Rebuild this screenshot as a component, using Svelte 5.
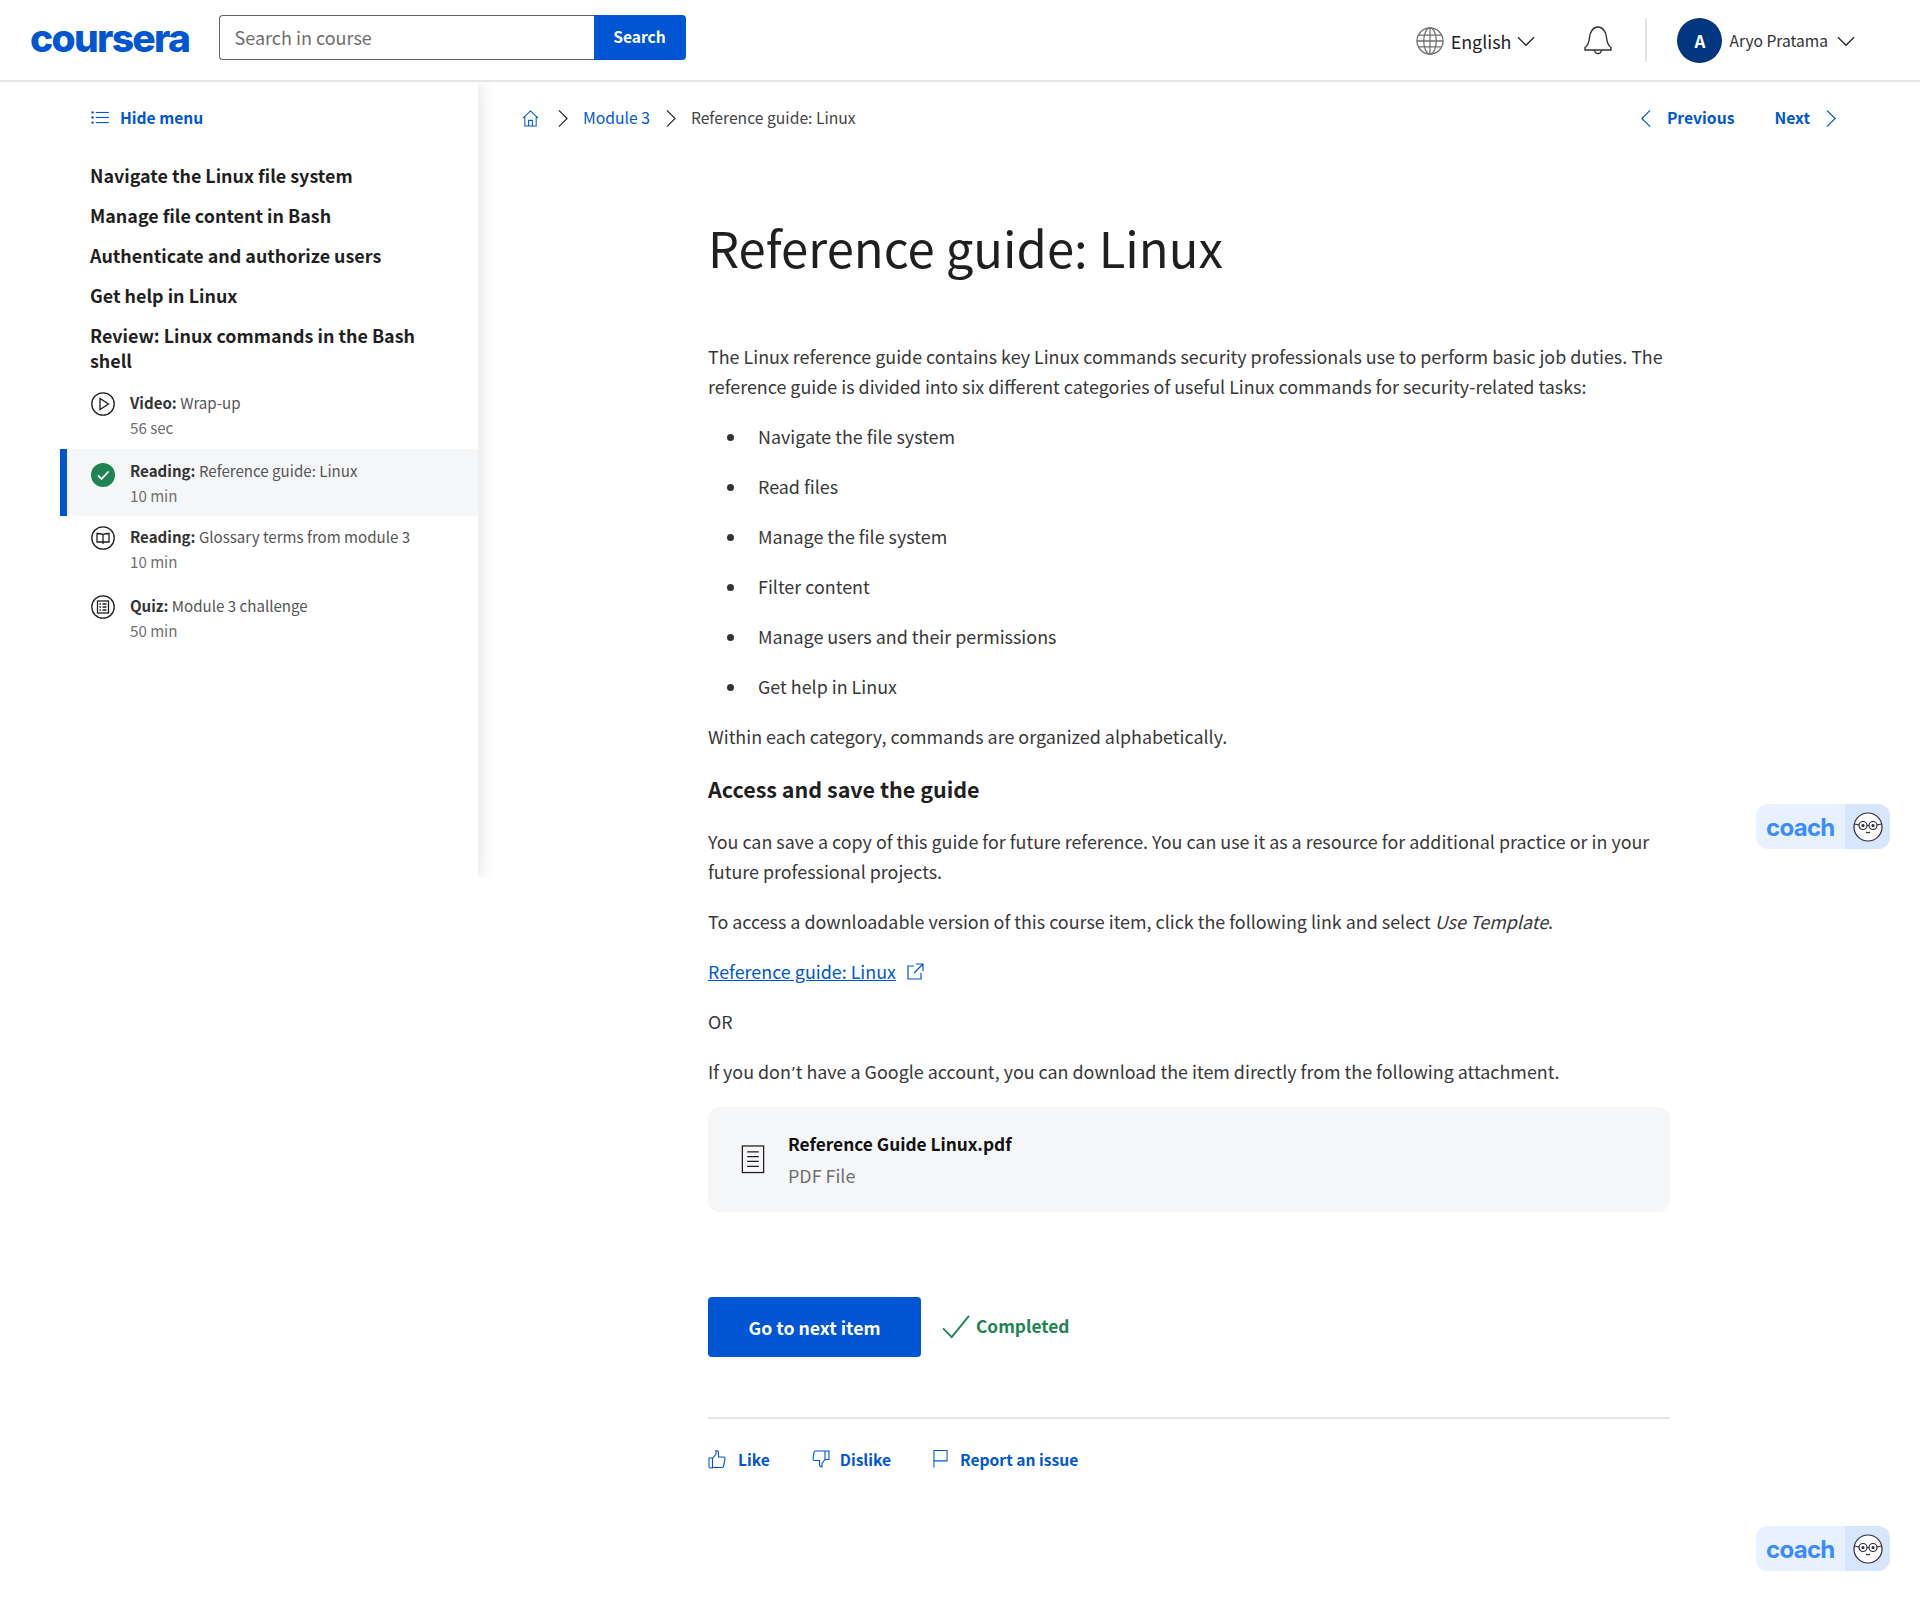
<script>
  const sections = [
    'Navigate the Linux file system',
    'Manage file content in Bash',
    'Authenticate and authorize users',
    'Get help in Linux',
    'Review: Linux commands in the Bash shell'
  ];
  const items = [
    { kind: 'video', label: 'Video:', name: 'Wrap-up', time: '56 sec' },
    { kind: 'done', label: 'Reading:', name: 'Reference guide: Linux', time: '10 min', active: true },
    { kind: 'book', label: 'Reading:', name: 'Glossary terms from module 3', time: '10 min' },
    { kind: 'quiz', label: 'Quiz:', name: 'Module 3 challenge', time: '50 min' }
  ];
  const bullets = [
    'Navigate the file system',
    'Read files',
    'Manage the file system',
    'Filter content',
    'Manage users and their permissions',
    'Get help in Linux'
  ];
</script>

<div class="page">
  <header class="topbar">
    <span class="logo">coursera</span>
    <div class="search">
      <input class="search-input" placeholder="Search in course" />
      <button class="search-btn">Search</button>
    </div>
    <div class="spacer"></div>
    <div class="lang">
      <svg width="28" height="28" viewBox="0 0 29 29" fill="none" stroke="#6f6f6f" stroke-width="1.3">
        <circle cx="14.5" cy="14.5" r="13.5" />
        <ellipse cx="14.5" cy="14.5" rx="6.5" ry="13.5" />
        <path d="M14.5 1v27M2.5 8.5h24M1 14.5h27M2.5 20.5h24" />
      </svg>
      <span class="lang-name">English</span>
      <svg width="18" height="11" viewBox="0 0 19 11" fill="none" stroke="#1f1f1f" stroke-width="1.3"><path d="M1 1l8.500 8.500L18 1" /></svg>
    </div>
    <svg class="bell" width="28" height="30" viewBox="0 0 28 30" fill="none" stroke="#333" stroke-width="1.4">
      <path d="M1 24h26v-2.500c-3-2-4-5-4.500-10C22 5.500 18.500 1 14 1S6 5.500 5.500 11.500c-.5 5-1.500 8-4.500 10z" />
      <path d="M10.500 24a3.500 3.500 0 0 0 7 0" />
    </svg>
    <div class="divider"></div>
    <div class="avatar">A</div>
    <span class="username">Aryo Pratama</span>
    <svg class="user-caret" width="18" height="11" viewBox="0 0 19 11" fill="none" stroke="#1f1f1f" stroke-width="1.3"><path d="M1 1l8.500 8.500L18 1" /></svg>
  </header>

  <div class="body">
    <aside class="sidebar">
      <div class="hide-menu">
        <svg width="18" height="13" viewBox="0 0 19 14" fill="#0056d2"><circle cx="1.500" cy="1.500" r="1.300" /><circle cx="1.500" cy="7" r="1.300" /><circle cx="1.500" cy="12.500" r="1.300" /><rect x="5" y="1" width="14" height="1.200" /><rect x="5" y="6.400" width="14" height="1.200" /><rect x="5" y="11.900" width="14" height="1.200" /></svg>
        <span>Hide menu</span>
      </div>
      <nav class="sections">
        {#each sections as s}
          <div class="section">{s}</div>
        {/each}
      </nav>
      <div class="items">
        {#each items as it}
          <div class="item" class:active={it.active}>
            <span class="item-icon">
              {#if it.kind === 'done'}
                <svg width="24" height="24" viewBox="0 0 24 24"><circle cx="12" cy="12" r="12" fill="#1f8354" /><path d="M7 12.500l3.500 3.500 7-7.500" fill="none" stroke="#fff" stroke-width="1.800" /></svg>
              {:else}
                <svg width="24" height="24" viewBox="0 0 24 24" fill="none" stroke="#1f1f1f" stroke-width="1.300">
                  <circle cx="12" cy="12" r="11.200" />
                  {#if it.kind === 'video'}
                    <path d="M9 6.500v11l8.500-5.500z" />
                  {:else if it.kind === 'book'}
                    <path d="M12 8.500c-1.500-1-4-1-6-1v8.500h6c2 0 4 0 6 0V7.500c-2 0-4.500 0-6 1zM12 8.500v9.500" />
                  {:else}
                    <rect x="6.500" y="6" width="11" height="12" />
                    <path d="M8.500 9h1.500M11.500 9h4M8.500 12h1.500M11.500 12h4M8.500 15h1.500M11.500 15h4" />
                  {/if}
                </svg>
              {/if}
            </span>
            <div class="item-text">
              <div class="item-title"><b>{it.label}</b> {it.name}</div>
              <div class="item-time">{it.time}</div>
            </div>
          </div>
        {/each}
      </div>
    </aside>

    <main class="main">
      <div class="crumbbar">
        <svg class="home" width="17" height="17" viewBox="0 0 18 18" fill="none" stroke="#0056d2" stroke-width="1.100"><path d="M1 8.500L9 1l8 7.500M3 7v10h12V7M7 17v-6h4v6" /></svg>
        <svg class="crumb-sep" width="10" height="19" viewBox="0 0 11 20" fill="none" stroke="#1f1f1f" stroke-width="1.200"><path d="M1 1l9 9-9 9" /></svg>
        <span class="crumb-link">Module 3</span>
        <svg class="crumb-sep second" width="10" height="19" viewBox="0 0 11 20" fill="none" stroke="#1f1f1f" stroke-width="1.200"><path d="M1 1l9 9-9 9" /></svg>
        <span class="crumb-cur">Reference guide: Linux</span>
        <div class="spacer"></div>
        <div class="pager">
          <svg width="10" height="19" viewBox="0 0 11 20" fill="none" stroke="#0056d2" stroke-width="1.300"><path d="M10 1l-9 9 9 9" /></svg>
          <span class="prev">Previous</span>
          <span class="next">Next</span>
          <svg width="10" height="19" viewBox="0 0 11 20" fill="none" stroke="#0056d2" stroke-width="1.300"><path d="M1 1l9 9-9 9" /></svg>
        </div>
      </div>

      <article class="article">
        <h1>Reference guide: Linux</h1>
        <p>The Linux reference guide contains key Linux commands security professionals use to perform basic job duties. The reference guide is divided into six different categories of useful Linux commands for security-related tasks:</p>
        <ul>
          {#each bullets as b}
            <li>{b}</li>
          {/each}
        </ul>
        <p>Within each category, commands are organized alphabetically.</p>
        <h2>Access and save the guide</h2>
        <p>You can save a copy of this guide for future reference. You can use it as a resource for additional practice or in your future professional projects.</p>
        <p>To access a downloadable version of this course item, click the following link and select <em>Use Template</em>.</p>
        <p class="ref-link">
          <a href="#top">Reference guide: Linux</a>
          <svg width="17" height="17" viewBox="0 0 17 17" fill="none" stroke="#0056d2" stroke-width="1.200"><path d="M7 3H1v13h13v-6M9 1h7v7M16 1L7 10" /></svg>
        </p>
        <p>OR</p>
        <p>If you don<span class="apos">’</span>t have a Google account, you can download the item directly from the following attachment.</p>

        <div class="attachment">
          <svg width="24" height="29" viewBox="0 0 24 30" fill="none" stroke="#1f1f1f" stroke-width="1.300"><rect x="1" y="1" width="22" height="27.500" /><path d="M6 7h12M6 12h12M6 17h12M6 22h12" /></svg>
          <div>
            <div class="att-name">Reference Guide Linux.pdf</div>
            <div class="att-type">PDF File</div>
          </div>
        </div>

        <div class="actions">
          <button class="next-btn">Go to next item</button>
          <svg width="29" height="24" viewBox="0 0 30 25" fill="none" stroke="#1f8354" stroke-width="2"><path d="M1 14l9 9L28 1" /></svg>
          <span class="completed">Completed</span>
        </div>

        <div class="feedback">
          <span class="fb like">
            <svg width="18" height="20" viewBox="0 0 18 20" fill="none" stroke="#0056d2" stroke-width="1.100"><path d="M1 9h3.500v10H2.500a1.500 1.500 0 0 1-1.500-1.500zM4.500 9.500L8 5V1.500c1.500 0 2.500 1 2.500 2.500v4h5a1.500 1.500 0 0 1 1.500 1.800l-1.500 7.500a1.500 1.500 0 0 1-1.500 1.200H4.500" /></svg>
            Like
          </span>
          <span class="fb dislike">
            <svg width="18" height="20" viewBox="0 0 18 20" fill="none" stroke="#0056d2" stroke-width="1.100"><path d="M17 2H3.500A1.500 1.500 0 0 0 2 3.200L1 10a1.500 1.500 0 0 0 1.500 1.500H7.500v4c0 1.500 1 2.500 2.500 2.500v-3.500l3-4H17zM13 10.500V2" /></svg>
            Dislike
          </span>
          <span class="fb report">
            <svg width="15" height="20" viewBox="0 0 16 20" fill="none" stroke="#0056d2" stroke-width="1.100"><path d="M1 19V1h14v11H1" /></svg>
            Report an issue
          </span>
        </div>
      </article>
    </main>
  </div>

  {#each [804, 1526] as top}
    <div class="coach" style="top: {top}px">
      <span class="coach-word">coach</span>
      <span class="coach-face">
        <svg width="30" height="30" viewBox="0 0 30 30" fill="#fff" stroke="#2b2b3a" stroke-width="1.200">
          <circle cx="15" cy="15" r="14" />
          <circle cx="10" cy="13.500" r="4" />
          <circle cx="20" cy="13.500" r="4" />
          <path d="M14 13.500h2M1.500 12l4.500 1M28.500 12l-4.500 1M13 20q2 1.500 4 0" fill="none" />
          <circle cx="10" cy="13.500" r="1" fill="#2b2b3a" />
          <circle cx="20" cy="13.500" r="1" fill="#2b2b3a" />
        </svg>
      </span>
    </div>
  {/each}
</div>

<style>
  :global(body) {
    margin: 0;
    background: #fff;
    font-family: "Noto Sans CJK SC", "Noto Sans", sans-serif;
    color: #1f1f1f;
  }
  .page {
    position: relative;
    height: 1600px;
    overflow: hidden;
  }
  .spacer {
    flex: 1;
  }
  .topbar {
    display: flex;
    align-items: center;
    height: 80px;
    border-bottom: 2px solid #e5e5e5;
    padding: 0 65px 0 30px;
  }
  .logo {
    width: 188.500px;
    font-family: "Inter", sans-serif;
    font-size: 39px;
    font-weight: 800;
    letter-spacing: -1.700px;
    color: #0056d2;
    line-height: 1;
    margin-top: -6px;
  }
  .search {
    display: flex;
    height: 45px;
    margin-top: -5px;
  }
  .search-input {
    width: 375px;
    box-sizing: border-box;
    border: 1px solid #636363;
    border-right: 0;
    border-radius: 4px 0 0 4px;
    padding: 0 15px 2px;
    font: 400 18px "Noto Sans CJK SC", sans-serif;
    color: #1f1f1f;
    outline: none;
  }
  .search-input::placeholder {
    color: #6f6f6f;
  }
  .search-btn {
    width: 92px;
    border: 0;
    border-radius: 0 4px 4px 0;
    padding: 0 0 3px;
    background: #0056d2;
    color: #fff;
    font: 600 15.600px "Noto Sans CJK SC", sans-serif;
  }
  .lang {
    display: flex;
    align-items: center;
    font-size: 17.900px;
    margin-top: 2px;
  }
  .lang-name {
    margin: 0 6px 0 7px;
  }
  .bell {
    margin-left: 49px;
    margin-top: 2px;
  }
  .divider {
    width: 2px;
    height: 44px;
    background: #e1e1e1;
    margin-left: 33px;
  }
  .avatar {
    width: 45px;
    height: 45px;
    border-radius: 50%;
    background: #00357f;
    color: #fff;
    font-size: 17px;
    font-weight: 700;
    display: flex;
    align-items: center;
    justify-content: center;
    margin-left: 30px;
  }
  .username {
    font-size: 15.600px;
    color: #333;
    margin: -1px 9px 0 7px;
  }
  .user-caret {
    margin-top: 2px;
  }

  .body {
    display: flex;
    align-items: flex-start;
  }
  .sidebar {
    width: 478px;
    height: 796px;
    box-sizing: border-box;
    padding-left: 60px;
    box-shadow: 0 0 18px rgba(0, 0, 0, 0.14);
    clip-path: inset(0 -24px 0 0);
    flex: none;
  }
  .hide-menu {
    display: flex;
    align-items: center;
    gap: 11px;
    padding: 21px 0 0 31px;
    height: 28px;
    color: #0056d2;
    font-size: 15.600px;
    font-weight: 600;
  }
  .sections {
    padding: 32px 40px 0 30px;
  }
  .section {
    font-size: 17.900px;
    font-weight: 600;
    line-height: 25px;
    color: #1f1f1f;
    margin-bottom: 15px;
  }
  .items {
    margin-top: -6px;
  }
  .item {
    display: flex;
    height: 67px;
    box-sizing: border-box;
    padding: 8px 0 0 23px;
    gap: 15.500px;
    border-left: 7px solid transparent;
  }
  .item:last-child {
    padding-top: 10px;
  }
  .item.active {
    background: #f5f6f8;
    border-left-color: #0056d2;
    padding-top: 9px;
  }
  .item .item-icon {
    padding-top: 2px;
  }
  .item.active .item-icon {
    padding-top: 5px;
  }
  .item-icon {
    height: 24px;
    margin-left: 0.500px;
  }
  .item-title {
    font-size: 15.100px;
    line-height: 24px;
    color: #555;
  }
  .item-title b {
    font-weight: 600;
    color: #333;
  }
  .item-time {
    font-size: 15.100px;
    line-height: 26px;
    color: #6f6f6f;
  }

  .main {
    flex: 1;
    min-width: 0;
  }
  .crumbbar {
    display: flex;
    align-items: center;
    height: 28px;
    padding: 21px 84px 0 44px;
    font-size: 15.700px;
  }
  .crumbbar svg {
    margin-top: 2px;
  }
  .home {
    margin-right: 19px;
  }
  .crumb-sep {
    margin-right: 15px;
  }
  .crumb-sep.second {
    margin-left: 16px;
  }
  .crumb-link {
    color: #0056d2;
  }
  .crumb-cur {
    color: #444;
  }
  .pager {
    display: flex;
    align-items: center;
    color: #0056d2;
    font-weight: 600;
  }
  .prev {
    margin: 0 40px 0 16px;
  }
  .next {
    margin-right: 16px;
  }
  .article {
    width: 962px;
    margin-left: 230px;
  }
  h1 {
    margin: 0;
    padding-top: 80px;
    font-size: 49px;
    line-height: 72px;
    font-weight: 400;
    color: #1f1f1f;
  }
  p {
    margin: 0 0 20px;
    font-size: 17.900px;
    line-height: 30px;
    color: #383838;
  }
  h1 + p {
    margin-top: 58px;
  }
  .apos {
    font-family: "Noto Sans", sans-serif;
    font-size: 16px;
    line-height: 1;
    padding: 0 1px;
  }
  ul {
    margin: 0;
    padding: 0 0 0 50px;
    list-style: none;
  }
  li {
    font-size: 17.900px;
    line-height: 30px;
    margin-bottom: 20px;
    color: #383838;
  }
  li::before {
    content: "";
    display: inline-block;
    width: 7px;
    height: 7px;
    border-radius: 50%;
    background: #333;
    margin: 0 24px 0 -31px;
    vertical-align: 3px;
  }
  h2 {
    margin: 0 0 22px;
    padding-top: 3px;
    font-size: 21.500px;
    line-height: 30px;
    font-weight: 600;
    color: #1f1f1f;
  }
  .ref-link {
    display: flex;
    align-items: center;
    gap: 11px;
  }
  a {
    color: #0056d2;
  }
  .attachment {
    display: flex;
    align-items: center;
    gap: 23px;
    height: 105px;
    margin-top: 21px;
    padding-left: 33px;
    background: #f5f6f8;
    border-radius: 12px;
  }
  p + .attachment {
    margin-top: 21px;
  }
  .att-name {
    font-size: 17.300px;
    font-weight: 600;
    line-height: 30px;
    color: #111;
  }
  .att-type {
    font-size: 17.900px;
    line-height: 32px;
    color: #6f6f6f;
  }
  .actions {
    display: flex;
    align-items: center;
    margin-top: 85px;
  }
  .next-btn {
    width: 213px;
    height: 60px;
    border: 0;
    border-radius: 4px;
    background: #0056d2;
    color: #fff;
    font: 600 17.700px "Noto Sans CJK SC", sans-serif;
    margin-right: 21px;
  }
  .completed {
    color: #1f8354;
    font-size: 17.300px;
    font-weight: 600;
    margin-left: 5px;
    margin-top: -4px;
  }
  .feedback {
    display: flex;
    align-items: center;
    margin-top: 60px;
    padding-top: 28px;
    border-top: 2px solid #e5e5e5;
    color: #0056d2;
    font-size: 15.600px;
    font-weight: 600;
    line-height: 24px;
  }
  .fb {
    display: flex;
    align-items: center;
    gap: 12px;
  }
  .like {
    margin-right: 42px;
  }
  .dislike {
    margin-right: 42px;
    gap: 10px;
  }
  .coach {
    position: absolute;
    left: 1756px;
    width: 134px;
    height: 45px;
    display: flex;
    align-items: center;
    justify-content: space-between;
    background: #e8f1ff;
    border-radius: 12px;
    overflow: hidden;
  }
  .coach-word {
    font-family: "Inter", sans-serif;
    font-size: 24px;
    font-weight: 700;
    letter-spacing: -0.700px;
    color: #3d8bff;
    padding: 2px 0 0 10px;
  }
  .coach-face {
    width: 45px;
    height: 45px;
    background: #d6e6ff;
    display: flex;
    align-items: center;
    justify-content: center;
  }
</style>
